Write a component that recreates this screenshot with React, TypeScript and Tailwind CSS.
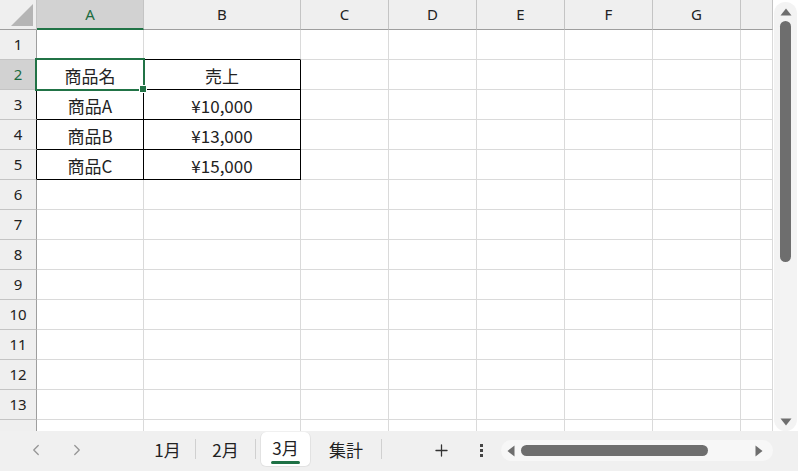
import React from 'react';
import { ChevronLeft, ChevronRight, Plus } from 'lucide-react';

const columns = [
  { label: 'A', width: 'w-[107px]' },
  { label: 'B', width: 'w-[157px]' },
  { label: 'C', width: 'w-[88px]' },
  { label: 'D', width: 'w-[88px]' },
  { label: 'E', width: 'w-[88px]' },
  { label: 'F', width: 'w-[88px]' },
  { label: 'G', width: 'w-[88px]' },
  { label: '', width: 'w-[32px]' },
];

const data: Record<number, string[]> = {
  2: ['商品名', '売上'],
  3: ['商品A', '¥10,000'],
  4: ['商品B', '¥13,000'],
  5: ['商品C', '¥15,000'],
};

const rows = Array.from({ length: 13 }, (_, i) => i + 1);

const cellFont = { fontFamily: '"Noto Sans CJK JP", sans-serif' };
const headFont = { fontFamily: '"Noto Sans", "Noto Sans CJK JP", sans-serif' };

function cellClass(row: number, col: number) {
  const inTable = row >= 2 && row <= 5 && col <= 1;
  const aboveTable = row === 1 && col <= 1;
  const base = 'h-full shrink-0 border-r border-b flex items-center justify-center text-[17px] text-[#222]';
  if (inTable) return `${base} border-r-black border-b-black`;
  if (aboveTable) return `${base} border-r-[#dadada] border-b-black`;
  return `${base} border-r-[#dadada] border-b-[#dadada]`;
}

function Sheet() {
  return (
    <div className="relative w-[773px] h-[431px] overflow-hidden">
      {/* column header */}
      <div className="flex h-[30px]" style={headFont}>
        <div className="relative w-[37px] h-full shrink-0 bg-[#efefef] border-r border-b border-r-[#c4c4c4] border-b-[#9e9e9e]">
          <div className="absolute left-[11px] top-[4px] w-[22px] h-[22px] bg-[#b5b5b5] [clip-path:polygon(100%_0,100%_100%,0_100%)]" />
        </div>
        {columns.map((c, i) =>
          i === 0 ? (
            <div
              key={c.label}
              className={`${c.width} h-full shrink-0 bg-[#d2d2d2] border-r border-r-[#c4c4c4] border-b-2 border-b-[#217346] flex items-center justify-center text-[15px] text-[#1d6b40]`}
            >
              {c.label}
            </div>
          ) : (
            <div
              key={c.label + i}
              className={`${c.width} h-full shrink-0 bg-[#efefef] border-r border-r-[#c4c4c4] border-b border-b-[#9e9e9e] flex items-center justify-center text-[15px] text-[#222]`}
            >
              {c.label}
            </div>
          )
        )}
      </div>

      {rows.map((r) => (
        <div key={r} className="flex h-[30px]">
          <div
            style={headFont}
            className={
              r === 2
                ? 'w-[37px] h-full shrink-0 bg-[#d2d2d2] border-r border-b border-r-black border-b-[#c4c4c4] flex items-center justify-center text-[15px] text-[#1d6b40]'
                : r >= 3 && r <= 5
                ? 'w-[37px] h-full shrink-0 bg-[#efefef] border-r border-b border-r-black border-b-[#c4c4c4] flex items-center justify-center text-[15px] text-[#222]'
                : 'w-[37px] h-full shrink-0 bg-[#efefef] border-r border-b border-r-[#9e9e9e] border-b-[#c4c4c4] flex items-center justify-center text-[15px] text-[#222]'
            }
          >
            {r}
          </div>
          {columns.map((c, i) => (
            <div key={i} className={`${c.width} ${cellClass(r, i)}`} style={cellFont}>
              <span className="pt-[3px]">{data[r]?.[i] ?? ''}</span>
            </div>
          ))}
        </div>
      ))}

      {/* partial row 14 */}
      <div className="flex h-[11px]">
        <div className="w-[37px] h-full shrink-0 bg-[#efefef] border-r border-r-[#9e9e9e]" />
        {columns.map((c, i) => (
          <div key={i} className={`${c.width} h-full shrink-0 border-r border-r-[#dadada]`} />
        ))}
      </div>

      {/* selection A2 */}
      <div className="absolute left-[35px] top-[58px] w-[110px] h-[33px] border-2 border-[#217346]" />
      <div className="absolute left-[139px] top-[85px] w-[8px] h-[8px] bg-[#217346] border border-white" />
    </div>
  );
}

function VScroll() {
  return (
    <div className="flex-1 flex justify-end pt-[2px] pr-[1px]">
      <div className="w-[23px] h-[429px] rounded-full bg-[#f3f3f3] flex flex-col items-center">
        <svg width="12" height="8" viewBox="0 0 12 8" className="mt-[6px]">
          <path d="M6 0.5 L11.5 7.5 L0.5 7.5 Z" fill="#6e6e6e" />
        </svg>
        <div className="mt-[5px] w-[11px] h-[241px] rounded-full bg-[#6e6e6e]" />
        <div className="flex-1" />
        <svg width="12" height="8" viewBox="0 0 12 8" className="mb-[5px]">
          <path d="M0.5 0.5 L11.5 0.5 L6 7.5 Z" fill="#6e6e6e" />
        </svg>
      </div>
    </div>
  );
}

function TabBar() {
  return (
    <div className="h-[40px] bg-[#f0f0f0] flex items-start relative" style={cellFont}>
      <div className="flex items-center h-[38px] pl-[27px]">
        <ChevronLeft size={18} strokeWidth={1.7} className="text-[#959595]" />
        <ChevronRight size={18} strokeWidth={1.7} className="text-[#959595] ml-[23px]" />
      </div>
      <div className="flex items-start ml-[54px]">
        <div className="w-[55px] h-[38px] flex items-center justify-center text-[17px] text-[#222]">1月</div>
        <div className="w-px h-[20px] mt-[8px] bg-[#d0d0d0]" />
        <div className="w-[59px] h-[38px] flex items-center justify-center text-[17px] text-[#222]">2月</div>
        <div className="w-px h-[20px] mt-[8px] bg-[#d0d0d0]" />
        <div className="ml-[4px] w-[51px] h-[35px] mt-[1px] bg-white rounded-md border-x border-b border-[#e2e2e2] flex flex-col items-center">
          <span className="text-[17px] text-[#222] mt-[5px] leading-[22px]">3月</span>
          <div className="mt-[2px] w-[29px] h-[3px] rounded-full bg-[#1e7145]" />
        </div>
        <div className="w-[70px] h-[38px] flex items-center justify-center text-[17px] text-[#222]">集計</div>
        <div className="w-px h-[20px] mt-[8px] bg-[#d0d0d0]" />
      </div>
      <div className="flex items-center h-[38px] ml-[50px]">
        <Plus size={19} strokeWidth={1.6} className="text-[#333]" />
      </div>
      <div className="flex flex-col items-center justify-center h-[38px] ml-[29px] gap-[2px]">
        <div className="w-[3px] h-[3px] bg-[#444]" />
        <div className="w-[3px] h-[3px] bg-[#444]" />
        <div className="w-[3px] h-[3px] bg-[#444]" />
      </div>
      <div className="ml-[18px] mt-[9px] w-[272px] h-[21px] rounded-full bg-[#f7f7f7] flex items-center px-[6px]">
        <svg width="8" height="12" viewBox="0 0 8 12">
          <path d="M7.5 0.5 L7.5 11.5 L0.5 6 Z" fill="#6e6e6e" />
        </svg>
        <div className="ml-[6px] w-[187px] h-[11px] rounded-full bg-[#6e6e6e]" />
        <div className="flex-1" />
        <svg width="8" height="12" viewBox="0 0 8 12" className="mr-[4px]">
          <path d="M0.5 0.5 L0.5 11.5 L7.5 6 Z" fill="#6e6e6e" />
        </svg>
      </div>
    </div>
  );
}

export default function App() {
  return (
    <div className="w-[798px] h-[471px] bg-white overflow-hidden flex flex-col">
      <div className="flex h-[431px]">
        <Sheet />
        <VScroll />
      </div>
      <TabBar />
    </div>
  );
}
